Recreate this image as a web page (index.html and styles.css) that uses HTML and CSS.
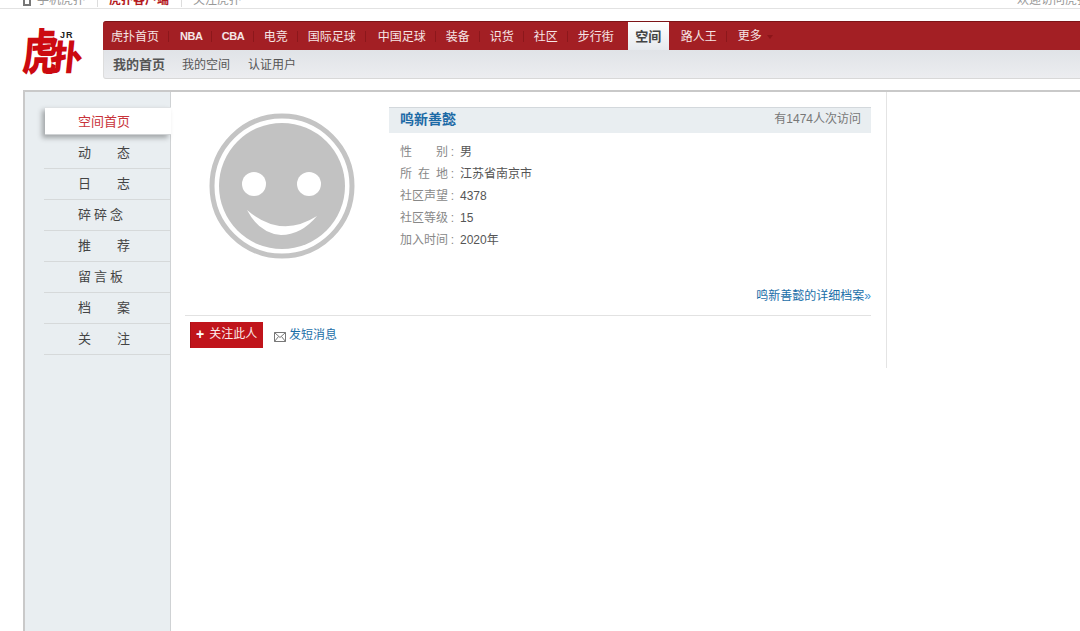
FILE: index.html
```html
<!DOCTYPE html>
<html lang="zh-CN">
<head>
<meta charset="utf-8">
<title>虎扑空间</title>
<link rel="stylesheet" href="styles.css">
</head>
<body>
<div class="topbar">
  <div class="topbar-left">
    <span class="phone"></span><span class="t-item">手机虎扑</span>
    <span class="t-item t-red">虎扑客户端</span>
    <span class="t-item">关注虎扑</span>
  </div>
  <div class="topbar-right">欢迎访问虎扑</div>
</div>
<header class="header">
  <div class="logo"><span class="logo-jr">JR</span><span class="logo-hu">虎</span><span class="logo-pu">扑</span></div>
  <nav class="nav">
    <ul class="nav-main">
      <li>虎扑首页</li><li class="latin first">NBA</li><li class="latin">CBA</li><li>电竞</li><li class="wide">国际足球</li><li>中国足球</li><li>装备</li><li>识货</li><li>社区</li><li class="nosep">步行街</li><li class="active">空间</li><li>路人王</li><li class="more">更多<i class="caret"></i></li>
    </ul>
    <ul class="nav-sub">
      <li class="cur">我的首页</li><li>我的空间</li><li>认证用户</li>
    </ul>
  </nav>
</header>
<main class="frame">
  <aside class="side">
    <ul class="menu">
      <li class="on">空间首页</li>
      <li><span class="two">动态</span></li>
      <li><span class="two">日志</span></li>
      <li><span class="three">碎碎念</span></li>
      <li><span class="two">推荐</span></li>
      <li><span class="three">留言板</span></li>
      <li><span class="two">档案</span></li>
      <li><span class="two">关注</span></li>
    </ul>
  </aside>
  <section class="panel">
    <div class="profile">
      <div class="avatar">
        <svg width="146" height="146" viewBox="0 0 146 146">
          <circle cx="73" cy="73" r="70" fill="none" stroke="#c4c4c4" stroke-width="5"/>
          <circle cx="73" cy="73" r="63" fill="#c2c2c2"/>
          <circle cx="45" cy="71" r="12" fill="#fff"/>
          <circle cx="100" cy="71" r="12" fill="#fff"/>
          <path d="M38 97Q72 126 108 103Q92 122 72 122Q50 120 38 97Z" fill="#fff"/>
        </svg>
      </div>
      <div class="info">
        <div class="info-head"><h1>鸣新善懿</h1><span>有1474人次访问</span></div>
        <dl class="rows">
          <div class="row"><dt>性别</dt><dd>男</dd></div>
          <div class="row"><dt>所在地</dt><dd>江苏省南京市</dd></div>
          <div class="row"><dt>社区声望</dt><dd>4378</dd></div>
          <div class="row"><dt>社区等级</dt><dd>15</dd></div>
          <div class="row"><dt>加入时间</dt><dd>2020年</dd></div>
        </dl>
        <a class="detail">鸣新善懿的详细档案<b>»</b></a>
      </div>
    </div>
    <div class="actions">
      <a class="follow"><b>+</b>关注此人</a>
      <a class="msg">
        <svg width="12" height="10" viewBox="0 0 12 10"><path d="M.5.5h11v9H.5zM.5.5 6 5.500 11.500.5M.5 9.500 4.500 4.500M11.500 9.500 7.500 4.500" fill="none" stroke="#777" stroke-width="1"/></svg>
        <span>发短消息</span>
      </a>
    </div>
  </section>
</main>
</body>
</html>
```
FILE: styles.css
```css
* { box-sizing: border-box; }
html, body { margin: 0; padding: 0; height: 631px; overflow: hidden; background: #fff; }
body { font: 12px/1.5 "Liberation Sans", "Noto Sans CJK SC", sans-serif; color: #555; }
ul, dl, dd, h1 { margin: 0; padding: 0; list-style: none; }

.topbar { height: 9px; border-bottom: 1px solid #e2e2e2; display: flex; justify-content: space-between; overflow: hidden; padding-left: 23px; color: #999; line-height: 14px; }
.topbar-left, .topbar-right { margin-top: -7px; display: flex; height: 14px; }
.phone { width: 8px; height: 11px; margin: 2px 6px 0 0; border: 2px solid #777; border-top: 0; }
.t-item { margin-right: 11px; padding-right: 12px; border-right: 1px solid #ddd; }
.t-item:last-child { border: 0; }
.t-red { color: #b4171c; font-weight: 700; }
.topbar-right { white-space: nowrap; width: 63px; }

.header { display: flex; padding-top: 12px; }
.logo { width: 103px; flex: none; position: relative; height: 58px; }
.logo-hu, .logo-pu { position: absolute; font-weight: 900; color: #cc0a10; line-height: 1; font-family: "Noto Sans CJK SC", sans-serif; transform-origin: left top; }
.logo-hu { left: 25px; top: 3px; font-size: 35px; transform: scale(1, 1.4) skewX(-6deg); }
.logo-pu { left: 52px; top: 17px; font-size: 33px; transform: scale(1, 1.05) skewX(-6deg); }
.logo-jr { position: absolute; left: 60px; top: 9px; font: 700 9px/10px "Liberation Sans", sans-serif; letter-spacing: 1px; color: #222; z-index: 1; }

.nav { flex: 1; min-width: 0; }
.nav-main { height: 29px; display: flex; background: #a31f24; border-top: 1px solid #7d1417; border-top-left-radius: 3px; padding-left: 8px; color: #f6e6e6; line-height: 30px; white-space: nowrap; }
.nav-main li { padding-right: 10px; margin-right: 10px; background: linear-gradient(#8c171b, #8c171b) right 9px / 1px 11px no-repeat; }
.nav-main .nosep { background: none; margin-right: 0; padding-right: 14px; }
.nav-main .latin { font-size: 11px; font-weight: 700; line-height: 29px; letter-spacing: -.5px; margin-right: 9.5px; }
.nav-main .first { margin-left: 1px; }
.nav-main .wide { margin-right: 12px; }
.nav-main .active { width: 41px; padding: 0; margin-right: 12px; text-align: center; background: linear-gradient(#fff, #e6e9ed); color: #444; font-size: 13px; font-weight: 700; line-height: 30px; }
.nav-main .more { background: none; display: flex; align-items: center; margin-left: 1px; }
.caret { width: 0; height: 0; margin: 2px 0 0 5px; border: 3px solid transparent; border-top: 4px solid #8c1519; border-bottom: 0; }
.nav-sub { height: 29px; display: flex; gap: 18px; padding-left: 9px; background: linear-gradient(#e0e3e7, #ecedf0); border-bottom: 1px solid #d8d8d8; border-left: 1px solid #ddd; border-bottom-left-radius: 3px; line-height: 30px; color: #555; }
.nav-sub .cur { font-size: 13px; font-weight: 700; margin-right: -1px; }

.frame { display: flex; margin: 11px 0 0 23px; height: 541px; border-top: 2px solid #c9c9c9; border-left: 2px solid #c9c9c9; }
.side { width: 146px; flex: none; background: #e9eef1; border-right: 1px solid #cfd2d4; padding: 15px 0 0 19px; }
.menu li { height: 31px; border-bottom: 1px solid #d6d9da; text-align: left; padding-left: 34px; font-size: 13px; line-height: 30px; color: #444; white-space: nowrap; }
.menu .on { height: 28px; margin: 0 -1px 3px 1px; padding-left: 33px; background: #fff; color: #c8333a; line-height: 28px; border-bottom: 1px solid #cfd2d4; border-top: 1px solid #dfe2e4; box-shadow: -3px 3px 5px rgba(0, 0, 0, .3); position: relative; }
.two { letter-spacing: 26px; }
.three { letter-spacing: 3px; }

.panel { width: 716px; height: 276px; flex: none; border-right: 1px solid #e4e4e4; padding: 15px 15px 0 14px; }
.profile { height: 209px; display: flex; border-bottom: 1px solid #e2e2e2; }
.avatar { width: 204px; flex: none; padding: 6px 0 0 24px; }
.avatar svg { display: block; }
.info { flex: 1; display: flex; flex-direction: column; min-width: 0; }
.info-head { height: 26px; display: flex; justify-content: space-between; background: #e9eef1; border-top: 1px solid #d3d8dc; padding: 0 10px 0 11px; line-height: 23px; color: #777; }
.info-head h1 { font-size: 14px; font-weight: 700; color: #1c6aa6; }
.rows { padding: 8px 0 0 11px; }
.row { display: flex; height: 22px; line-height: 22px; }
.row dt { width: 60px; flex: none; color: #888; position: relative; padding-right: 12px; text-align-last: justify; }
.row dt::after { content: ":"; position: absolute; right: 6px; top: 0; }
.row dd { color: #555; }
.detail { margin: auto 0 8px; align-self: flex-end; color: #1a6ea8; line-height: 22px; }
.detail b { font-weight: 400; color: #3a8fd0; }

.actions { display: flex; align-items: center; padding: 6px 0 0 5px; }
.follow { width: 73px; height: 26px; background: #c0141b; color: #fbeaea; padding-left: 5px; line-height: 24px; display: flex; gap: 5px; border-left: 1px solid #a81015; }
.follow b { font-size: 14px; color: #fff; }
.msg { display: flex; align-items: center; gap: 3px; margin-left: 11px; color: #1a6ea8; }
.msg svg { display: block; margin-top: 3px; }
```
